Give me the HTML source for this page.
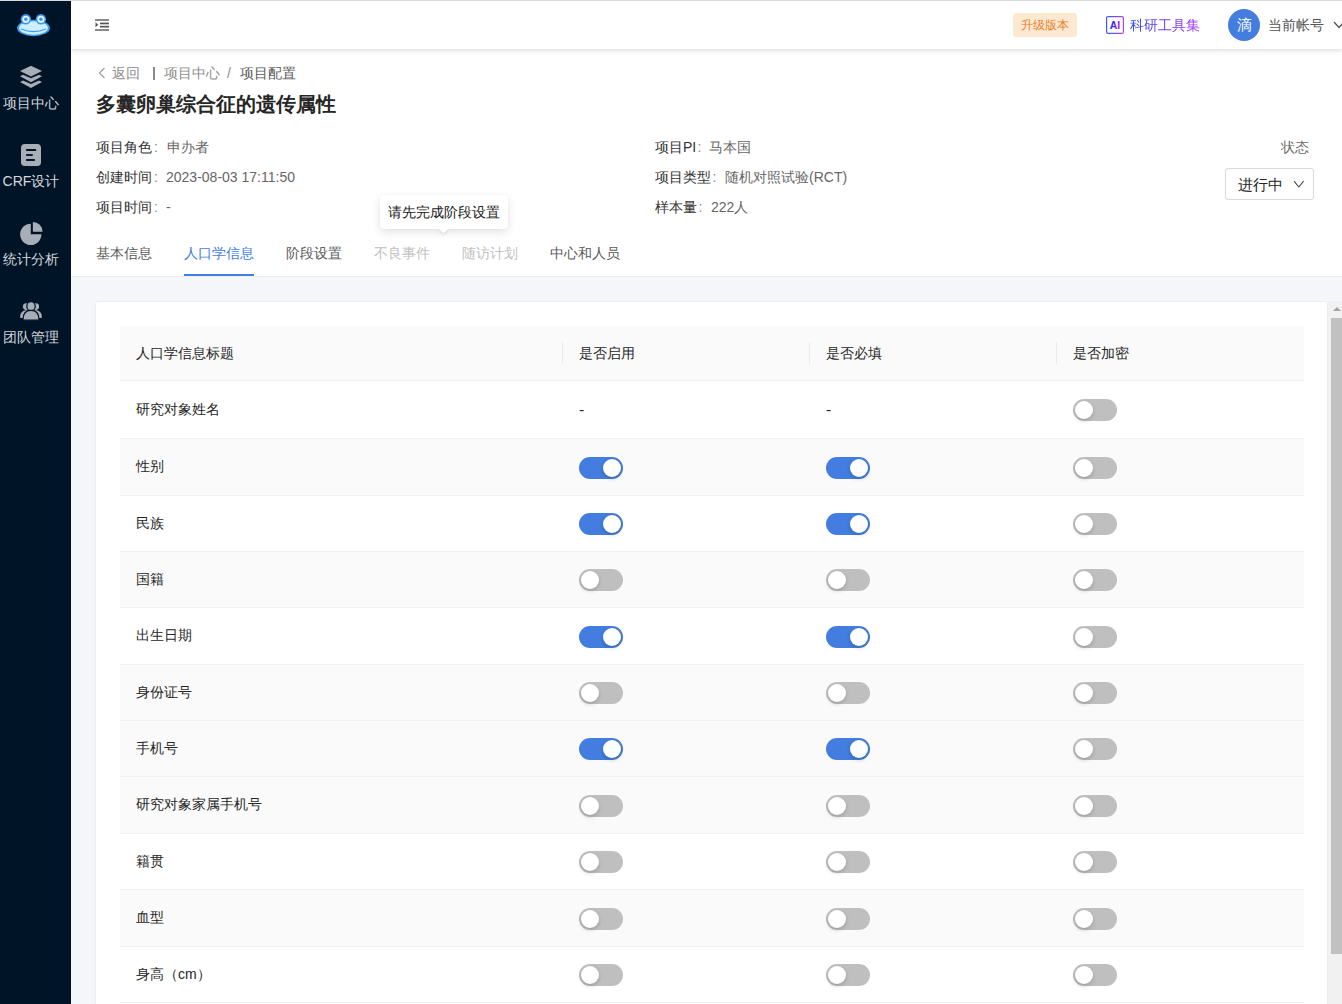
<!DOCTYPE html>
<html><head><meta charset="utf-8">
<style>
*{box-sizing:border-box;margin:0;padding:0}
html,body{width:1342px;height:1004px;overflow:hidden;background:#f5f6fa;font-family:"Liberation Sans",sans-serif;font-size:14px;color:#262626}
.abs{position:absolute;white-space:nowrap}
.topline{position:absolute;left:0;top:0;width:1342px;height:1px;background:#d9dadd;z-index:20}
.side{position:absolute;left:0;top:0;width:71px;height:1004px;background:#001428;z-index:10}
.side .lbl{position:absolute;left:0;width:62px;text-align:center;color:#d4d8dd;font-size:14px;line-height:16px;white-space:nowrap}
.side svg{position:absolute}
.header{position:absolute;left:71px;top:1px;width:1271px;height:48px;background:#fff;box-shadow:0 1px 4px rgba(0,21,41,.12),0 2px 8px rgba(0,21,41,.05);z-index:5}
.phead{position:absolute;left:71px;top:49px;width:1271px;height:228px;background:#fff;border-bottom:1px solid #eceef2}
.card{position:absolute;left:95px;top:301px;width:1233px;height:760px;background:#fff;border-radius:3px;border:1px solid #ededed}
.sb{position:absolute;left:1328px;top:301px;width:14px;height:703px;background:#f1f1f1}
.sb .thumb{position:absolute;left:3px;top:17px;width:11px;height:636px;background:#c1c1c1}
.sb .arr{position:absolute;left:5px;top:6px;width:0;height:0;border-left:4px solid transparent;border-right:4px solid transparent;border-bottom:4px solid #a3a3a3}
.row{position:absolute;left:120px;width:1184px;border-bottom:1px solid #f0f0f0}
.row.g{background:#fafafa}
.txt{position:absolute;white-space:nowrap;line-height:22px;font-size:14px;color:#262626}
.sep{position:absolute;width:1px;height:22px;background:#ebebeb}
.sw{position:absolute;width:44px;height:22px;border-radius:11px;background:#bfbfbf}
.sw::after{content:"";position:absolute;top:2px;left:2px;width:18px;height:18px;border-radius:50%;background:#fff;box-shadow:0 2px 4px rgba(0,35,11,.2)}
.sw.on{background:#427ddf}
.sw.on::after{left:24px}
.tab{position:absolute;top:242px;line-height:22px;font-size:14px;color:#595959;white-space:nowrap}
</style></head>
<body>
<div class="topline"></div>
<div class="side"><svg style="left:15.5px;top:13px" width="35" height="23.8" viewBox="0 0 34 23">
<ellipse cx="17" cy="14.5" rx="16" ry="8" fill="#3a9cf0"/>
<ellipse cx="17" cy="14.5" rx="14" ry="6.5" fill="#cdeeff"/>
<circle cx="9.6" cy="6" r="5" fill="#3a96ee"/><circle cx="24.2" cy="6" r="5" fill="#3a96ee"/>
<circle cx="9.6" cy="6" r="3.5" fill="#e2f4ff"/><circle cx="24.2" cy="6" r="3.5" fill="#e2f4ff"/>
<circle cx="9.6" cy="6" r="1.7" fill="#3a96ee"/><circle cx="24.2" cy="6" r="1.7" fill="#3a96ee"/>
<path d="M5 15.5 Q17 20.5 29 15.5" stroke="#3a9cf0" stroke-width="1.2" fill="none"/>
</svg>
<svg style="left:20px;top:62px" width="22" height="28" viewBox="0 0 22 28">
<path d="M11 3.7 L22 9.1 L11 14.6 L0 9.1 Z" fill="#a8aeb6"/>
<path d="M0 14.3 L3 12.8 L11 16.2 L19 12.8 L22 14.3 L11 20.3 Z" fill="#a8aeb6"/>
<path d="M0 20 L3 18.5 L11 22 L19 18.5 L22 20 L11 26 Z" fill="#a8aeb6"/>
</svg>
<div class="lbl" style="top:95px">项目中心</div>
<svg style="left:21px;top:143px" width="20" height="23" viewBox="0 0 20 23">
<rect x="0" y="0.9" width="20" height="22.1" rx="3.8" fill="#a8aeb6"/>
<rect x="4.9" y="6.1" width="10.4" height="1.8" rx="0.9" fill="#001428"/>
<rect x="4.9" y="11.1" width="7.1" height="1.8" rx="0.9" fill="#0b1e33"/>
<rect x="4.9" y="16.1" width="9.2" height="1.8" rx="0.9" fill="#001428"/>
</svg>
<div class="lbl" style="top:173px">CRF设计</div>
<svg style="left:20px;top:222px" width="23" height="23" viewBox="0 0 22 22">
<path d="M10.3 1.6 A10.2 10.2 0 1 0 20.5 11.8 L10.3 11.8 Z" fill="#a8aeb6"/>
<path d="M12.3 0 A9.3 9.3 0 0 1 21.6 9.3 L12.3 9.3 Z" fill="#a8aeb6"/>
</svg>
<div class="lbl" style="top:251px">统计分析</div>
<svg style="left:20px;top:300px" width="22" height="21" viewBox="0 0 22 21">
<circle cx="6.3" cy="6.6" r="3.4" fill="#a8aeb6"/><circle cx="15.7" cy="6.6" r="3.4" fill="#a8aeb6"/>
<path d="M0.1 16.8 Q0.3 10.8 6 10.3 L9 10.3 L8 18 L1 18 Q0.1 18 0.1 16.8 Z" fill="#a8aeb6"/>
<path d="M21.9 16.8 Q21.7 10.8 16 10.3 L13 10.3 L14 18 L21 18 Q21.9 18 21.9 16.8 Z" fill="#a8aeb6"/>
<ellipse cx="11" cy="6.2" rx="4.2" ry="4.5" fill="#a8aeb6" stroke="#001428" stroke-width="1.3"/>
<path d="M3 19.6 C3 13.6 6.2 10.4 11 10.4 C15.8 10.4 19 13.6 19 19.6 Q19 20.2 18.4 20.2 L3.6 20.2 Q3 20.2 3 19.6 Z" fill="#a8aeb6" stroke="#001428" stroke-width="1.3"/>
</svg>
<div class="lbl" style="top:329px">团队管理</div></div>
<div class="header"><svg style="position:absolute;left:24px;top:17px" width="14" height="13" viewBox="0 0 14 13">
<rect x="0" y="1" width="14" height="2" fill="#8a8a8a"/>
<rect x="5" y="4.6" width="9" height="1.7" fill="#555"/>
<rect x="5" y="7.8" width="9" height="1.7" fill="#555"/>
<rect x="0" y="11" width="14" height="2" fill="#8a8a8a"/>
<path d="M0.5 4.3 L3.3 6.8 L0.5 9.3 Z" fill="#555"/>
</svg>
<div class="abs" style="left:942px;top:12px;width:64px;height:24px;background:#fde8d2;border-radius:3px;color:#e8801f;font-size:12px;line-height:24px;text-align:center">升级版本</div>
<svg style="position:absolute;left:1035px;top:15px" width="18" height="18" viewBox="0 0 18 18">
<defs><linearGradient id="g1" x1="0" y1="0" x2="1" y2="0"><stop offset="0" stop-color="#3a5ee8"/><stop offset="1" stop-color="#b040f0"/></linearGradient></defs>
<rect x="0.6" y="0.6" width="16.8" height="16.8" rx="1.5" fill="none" stroke="url(#g1)" stroke-width="1.2"/>
<defs><linearGradient id="g2" x1="0" y1="0" x2="1" y2="0"><stop offset="0.3" stop-color="#2a2ae0"/><stop offset="0.75" stop-color="#9a1ef0"/></linearGradient></defs><text x="9" y="13.4" font-size="10.5" font-weight="bold" text-anchor="middle" fill="url(#g2)" font-family="Liberation Sans">AI</text>
</svg>
<div class="abs" style="left:1059px;top:13px;font-size:14px;line-height:22px;background:linear-gradient(90deg,#2f48e8,#a632ee);-webkit-background-clip:text;background-clip:text;color:transparent">科研工具集</div>
<div class="abs" style="left:1157px;top:8px;width:32px;height:32px;border-radius:50%;background:#427ddf;color:#fff;font-size:15px;line-height:32px;text-align:center">滴</div>
<div class="abs" style="left:1197px;top:13px;font-size:14px;line-height:22px;color:#555">当前帐号</div>
<svg style="position:absolute;left:1262px;top:19px" width="12" height="10" viewBox="0 0 12 10"><path d="M1 2 L6 7.5 L11 2" stroke="#555" stroke-width="1.3" fill="none"/></svg></div>
<div class="phead"></div><svg style="position:absolute;left:98px;top:67px" width="8" height="12" viewBox="0 0 8 12"><path d="M6.5 1 L1.5 6 L6.5 11" stroke="#9a9a9a" stroke-width="1.1" fill="none"/></svg>
<div class="abs" style="left:112px;top:62px;line-height:22px;color:#8c8c8c">返回</div>
<div class="abs" style="left:153px;top:67px;width:1.5px;height:13px;background:#8a8a8a"></div>
<div class="abs" style="left:164px;top:62px;line-height:22px;color:#8c8c8c">项目中心</div>
<div class="abs" style="left:227px;top:62px;line-height:22px;color:#8c8c8c">/</div>
<div class="abs" style="left:240px;top:62px;line-height:22px;color:#595959">项目配置</div>
<div class="abs" style="left:96px;top:90px;font-size:20px;line-height:28px;font-weight:bold;color:#262626">多囊卵巢综合征的遗传属性</div>
<div class="abs" style="left:96px;top:136px;line-height:22px;color:#333">项目角色</div>
<div class="abs" style="left:154px;top:136px;line-height:22px;color:#888">:</div>
<div class="abs" style="left:167px;top:136px;line-height:22px;color:#666">申办者</div>
<div class="abs" style="left:96px;top:166px;line-height:22px;color:#333">创建时间</div>
<div class="abs" style="left:154px;top:166px;line-height:22px;color:#888">:</div>
<div class="abs" style="left:166px;top:166px;line-height:22px;color:#666">2023-08-03 17:11:50</div>
<div class="abs" style="left:96px;top:196px;line-height:22px;color:#333">项目时间</div>
<div class="abs" style="left:154px;top:196px;line-height:22px;color:#888">:</div>
<div class="abs" style="left:166px;top:196px;line-height:22px;color:#666">-</div>
<div class="abs" style="left:655px;top:136px;line-height:22px;color:#333">项目PI</div>
<div class="abs" style="left:697.5px;top:136px;line-height:22px;color:#888">:</div>
<div class="abs" style="left:709px;top:136px;line-height:22px;color:#666">马本国</div>
<div class="abs" style="left:655px;top:166px;line-height:22px;color:#333">项目类型</div>
<div class="abs" style="left:712.5px;top:166px;line-height:22px;color:#888">:</div>
<div class="abs" style="left:725px;top:166px;line-height:22px;color:#666">随机对照试验(RCT)</div>
<div class="abs" style="left:655px;top:196px;line-height:22px;color:#333">样本量</div>
<div class="abs" style="left:698.5px;top:196px;line-height:22px;color:#888">:</div>
<div class="abs" style="left:711px;top:196px;line-height:22px;color:#666">222人</div>
<div class="abs" style="left:1281px;top:136px;line-height:22px;color:#6a6a6a">状态</div>
<div class="abs" style="left:1225px;top:168px;width:89px;height:32px;border:1px solid #d9d9d9;border-radius:3px;background:#fff"></div>
<div class="abs" style="left:1238px;top:174px;line-height:22px;font-size:15px;color:#262626">进行中</div>
<svg style="position:absolute;left:1292.5px;top:179.5px" width="12" height="9" viewBox="0 0 12 9"><path d="M1 1.2 L5.8 7 L10.6 1.2" stroke="#444" stroke-width="1.1" fill="none"/></svg>
<div class="tab" style="left:96px;color:#595959">基本信息</div>
<div class="tab" style="left:184px;color:#427ddf">人口学信息</div>
<div class="tab" style="left:286px;color:#595959">阶段设置</div>
<div class="tab" style="left:374px;color:#bfbfbf">不良事件</div>
<div class="tab" style="left:462px;color:#bfbfbf">随访计划</div>
<div class="tab" style="left:550px;color:#595959">中心和人员</div>
<div class="abs" style="left:184px;top:274px;width:70px;height:2px;background:#427ddf"></div>
<div class="abs" style="left:380px;top:195px;width:128px;height:34px;background:#fff;border-radius:4px;box-shadow:0 3px 8px rgba(0,0,0,.12),0 0 1px rgba(0,0,0,.08);z-index:3"></div>
<div class="abs" style="left:440px;top:225px;width:7px;height:7px;background:#fff;transform:rotate(45deg);box-shadow:2px 2px 3px rgba(0,0,0,.07);z-index:3"></div>
<div class="abs" style="left:380px;top:195px;width:128px;height:31px;background:#fff;border-radius:4px;z-index:4"></div>
<div class="abs" style="left:388px;top:201px;line-height:22px;color:#1a1a1a;z-index:5">请先完成阶段设置</div>
<div class="card"></div>
<div class="row g" style="top:326px;height:55px"></div>
<div class="txt" style="left:136px;top:342px">人口学信息标题</div>
<div class="txt" style="left:579px;top:342px">是否启用</div>
<div class="txt" style="left:826px;top:342px">是否必填</div>
<div class="txt" style="left:1073px;top:342px">是否加密</div>
<div class="sep" style="left:562px;top:342px"></div>
<div class="sep" style="left:809px;top:342px"></div>
<div class="sep" style="left:1056px;top:342px"></div>
<div class="row" style="top:381px;height:58px"></div>
<div class="txt" style="left:136px;top:397.8px">研究对象姓名</div>
<div class="txt" style="left:579px;top:399.2px;transform:scaleX(1.15);transform-origin:left">-</div>
<div class="txt" style="left:826px;top:399.2px;transform:scaleX(1.15);transform-origin:left">-</div>
<div class="sw" style="left:1073px;top:399.0px"></div>
<div class="row g" style="top:439px;height:57px"></div>
<div class="txt" style="left:136px;top:455.3px">性别</div>
<div class="sw on" style="left:579px;top:456.5px"></div>
<div class="sw on" style="left:826px;top:456.5px"></div>
<div class="sw" style="left:1073px;top:456.5px"></div>
<div class="row" style="top:496px;height:56px"></div>
<div class="txt" style="left:136px;top:511.8px">民族</div>
<div class="sw on" style="left:579px;top:513.0px"></div>
<div class="sw on" style="left:826px;top:513.0px"></div>
<div class="sw" style="left:1073px;top:513.0px"></div>
<div class="row g" style="top:552px;height:56px"></div>
<div class="txt" style="left:136px;top:567.8px">国籍</div>
<div class="sw" style="left:579px;top:569.0px"></div>
<div class="sw" style="left:826px;top:569.0px"></div>
<div class="sw" style="left:1073px;top:569.0px"></div>
<div class="row" style="top:608px;height:57px"></div>
<div class="txt" style="left:136px;top:624.3px">出生日期</div>
<div class="sw on" style="left:579px;top:625.5px"></div>
<div class="sw on" style="left:826px;top:625.5px"></div>
<div class="sw" style="left:1073px;top:625.5px"></div>
<div class="row g" style="top:665px;height:56px"></div>
<div class="txt" style="left:136px;top:680.8px">身份证号</div>
<div class="sw" style="left:579px;top:682.0px"></div>
<div class="sw" style="left:826px;top:682.0px"></div>
<div class="sw" style="left:1073px;top:682.0px"></div>
<div class="row g" style="top:721px;height:56px"></div>
<div class="txt" style="left:136px;top:736.8px">手机号</div>
<div class="sw on" style="left:579px;top:738.0px"></div>
<div class="sw on" style="left:826px;top:738.0px"></div>
<div class="sw" style="left:1073px;top:738.0px"></div>
<div class="row g" style="top:777px;height:57px"></div>
<div class="txt" style="left:136px;top:793.3px">研究对象家属手机号</div>
<div class="sw" style="left:579px;top:794.5px"></div>
<div class="sw" style="left:826px;top:794.5px"></div>
<div class="sw" style="left:1073px;top:794.5px"></div>
<div class="row" style="top:834px;height:56px"></div>
<div class="txt" style="left:136px;top:849.8px">籍贯</div>
<div class="sw" style="left:579px;top:851.0px"></div>
<div class="sw" style="left:826px;top:851.0px"></div>
<div class="sw" style="left:1073px;top:851.0px"></div>
<div class="row g" style="top:890px;height:57px"></div>
<div class="txt" style="left:136px;top:906.3px">血型</div>
<div class="sw" style="left:579px;top:907.5px"></div>
<div class="sw" style="left:826px;top:907.5px"></div>
<div class="sw" style="left:1073px;top:907.5px"></div>
<div class="row" style="top:947px;height:56px"></div>
<div class="txt" style="left:136px;top:962.8px">身高（cm）</div>
<div class="sw" style="left:579px;top:964.0px"></div>
<div class="sw" style="left:826px;top:964.0px"></div>
<div class="sw" style="left:1073px;top:964.0px"></div>
<div class="sb"><div class="arr"></div><div class="thumb"></div></div>
</body></html>
